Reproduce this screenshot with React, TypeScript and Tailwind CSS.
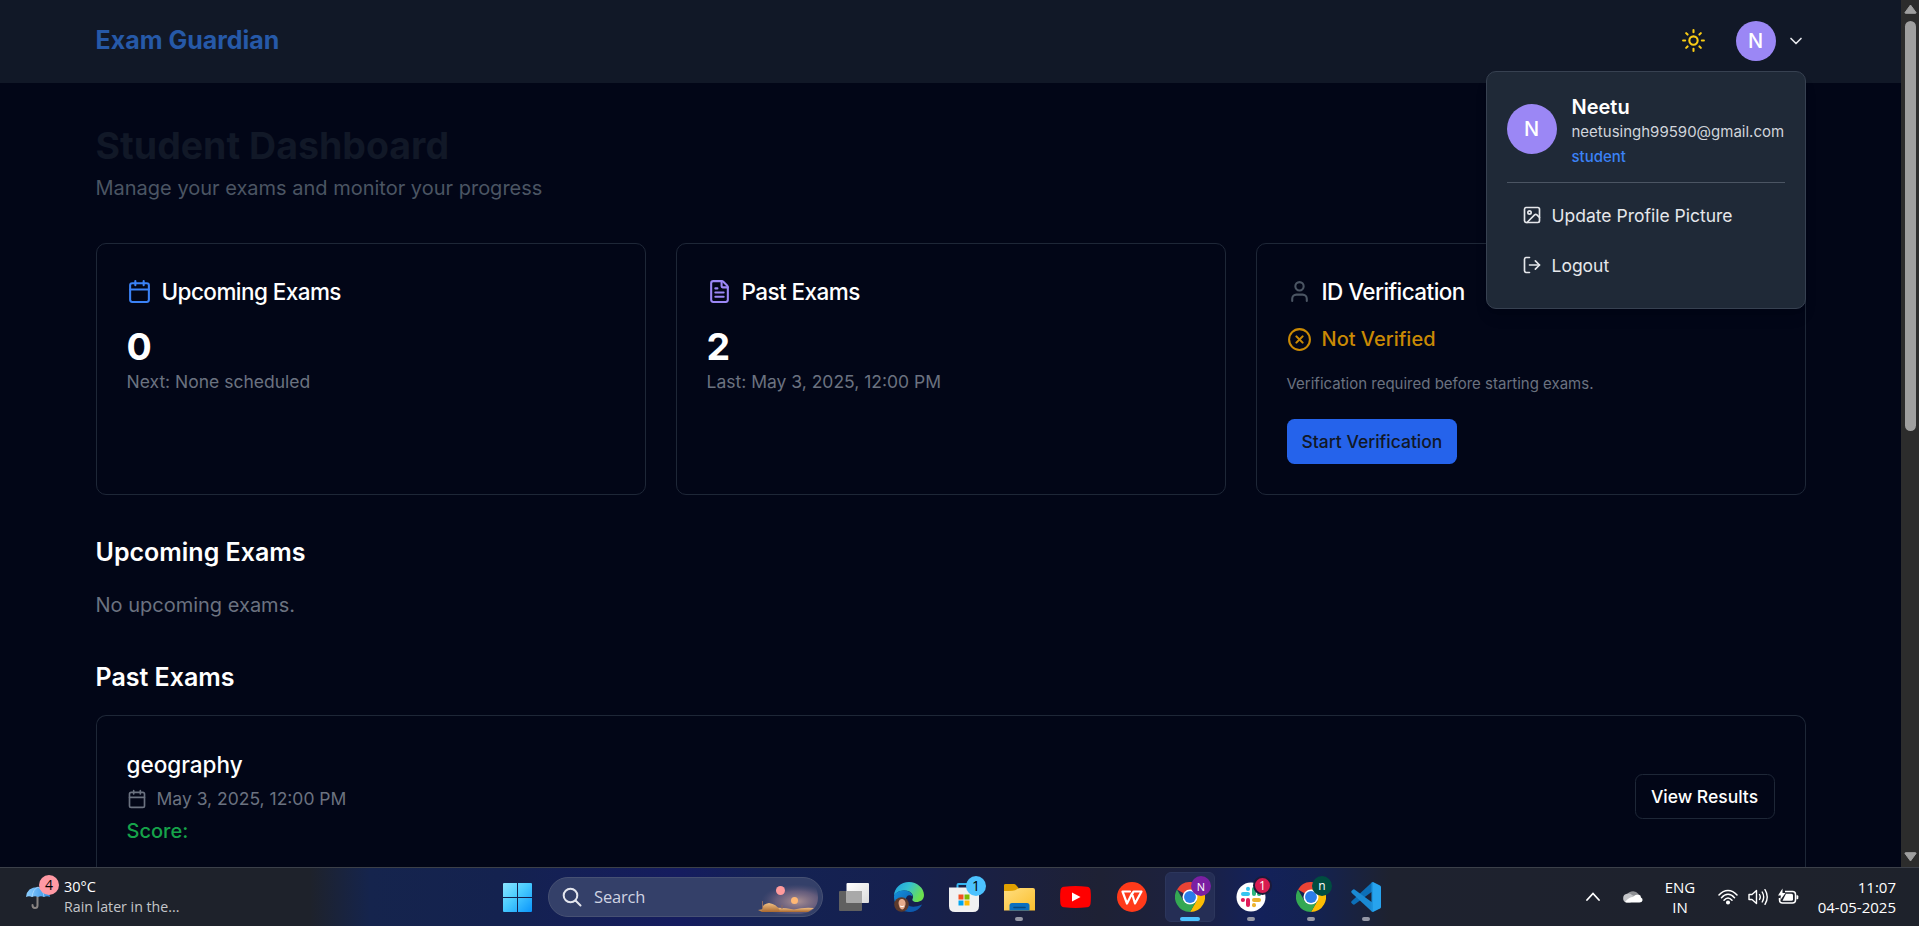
import type { ReactNode } from "react";
import {
  Calendar,
  ChevronDown,
  CircleX,
  FileText,
  Image as ImageIcon,
  LogOut,
  Sun,
  User,
} from "lucide-react";

function Header() {
  return (
    <header className="h-[83px] shrink-0 bg-[#111827]">
      <div className="mx-auto flex h-[82px] w-[1710px] items-center justify-between">
        <div className="-mt-px text-[25px] leading-[35px] font-bold text-[#2659a8]">Exam Guardian</div>
        <div className="relative flex items-center">
          <Sun className="mr-[30px] mb-px size-[25px] text-[#facc15]" />
          <div className="flex size-10 items-center justify-center rounded-full bg-[#9b87f5] text-[20px] font-medium text-white">
            N
          </div>
          <ChevronDown className="ml-2.5 size-5 text-gray-200" />
          <ProfileMenu />
        </div>
      </div>
    </header>
  );
}

function MenuItem({ icon, label }: { icon: ReactNode; label: string }) {
  return (
    <div className="flex h-[45px] items-center gap-2.5 px-[15px] text-[17.5px] text-gray-200">
      {icon}
      <span className="pt-px">{label}</span>
    </div>
  );
}

function ProfileMenu() {
  return (
    <div className="absolute top-[50px] right-0 z-10 flex w-80 flex-col rounded-[10px] border border-[#374151] bg-[#1f2937] p-5 shadow-lg">
      <div className="flex items-center gap-[15px] border-b border-[#4b5563] pb-[15px]">
        <div className="mb-px flex size-[50px] shrink-0 items-center justify-center rounded-full bg-[#9b87f5] text-[20px] font-medium text-white">
          N
        </div>
        <div className="flex flex-col">
          <span className="text-[20px] leading-[30px] font-semibold text-white">Neetu</span>
          <span className="text-[15px] leading-5 text-gray-300">neetusingh99590@gmail.com</span>
          <span className="mt-[5px] text-[15px] leading-5 font-medium text-[#3b82f6]">student</span>
        </div>
      </div>
      <div className="mt-2.5 flex flex-col gap-[5px]">
        <MenuItem icon={<ImageIcon className="mb-px size-5" />} label="Update Profile Picture" />
        <MenuItem icon={<LogOut className="mb-px size-5" />} label="Logout" />
      </div>
    </div>
  );
}

function StatCard({ icon, title, children }: { icon: ReactNode; title: string; children: ReactNode }) {
  return (
    <section className="flex h-[252px] flex-col items-start rounded-[10px] border border-[#1e2737] p-[30px]">
      <div className="mb-[15px] flex h-[35px] items-center gap-2.5">
        {icon}
        <h3 className="text-[22.5px] font-medium tracking-tight text-white">{title}</h3>
      </div>
      {children}
    </section>
  );
}

function Dashboard() {
  return (
    <main className="mx-auto flex w-[1710px] flex-col pt-10">
      <h1 className="text-[37.5px] leading-[45px] font-bold text-[#111827]">Student Dashboard</h1>
      <p className="mt-[5px] text-[20px] leading-[30px] text-[#4b5563]">
        Manage your exams and monitor your progress
      </p>

      <div className="mt-10 grid grid-cols-3 gap-[30px]">
        <StatCard icon={<Calendar className="size-[25px] text-[#3b82f6]" />} title="Upcoming Exams">
          <span className="text-[37.5px] leading-[45px] font-bold text-white">0</span>
          <span className="text-[17.5px] leading-[25px] text-[#6b7280]">Next: None scheduled</span>
        </StatCard>
        <StatCard icon={<FileText className="size-[25px] text-[#9b87f5]" />} title="Past Exams">
          <span className="text-[37.5px] leading-[45px] font-bold text-white">2</span>
          <span className="text-[17.5px] leading-[25px] text-[#6b7280]">Last: May 3, 2025, 12:00 PM</span>
        </StatCard>
        <StatCard icon={<User className="size-[25px] text-[#4b5563]" />} title="ID Verification">
          <div className="flex h-[30px] items-center gap-2.5 text-[20px] font-medium text-[#ca8a04]">
            <CircleX className="size-[25px]" />
            Not Verified
          </div>
          <span className="mt-5 text-[15px] leading-5 text-[#6b7280]">
            Verification required before starting exams.
          </span>
          <button className="mt-[25px] h-[45px] rounded-[7.5px] bg-[#2563eb] px-[15px] pt-0.5 text-[17.5px] font-medium text-[#111827]">
            Start Verification
          </button>
        </StatCard>
      </div>

      <h2 className="mt-10 text-[25px] leading-[35px] font-semibold text-white">Upcoming Exams</h2>
      <p className="mt-5 text-[20px] leading-[30px] text-[#6b7280]">No upcoming exams.</p>

      <h2 className="mt-10 text-[25px] leading-[35px] font-semibold text-white">Past Exams</h2>
      <section className="mt-5 flex h-[162px] shrink-0 items-center justify-between rounded-t-[10px] border border-b-0 border-[#1e2737] px-[30px]">
        <div className="flex flex-col">
          <h3 className="-mt-px text-[22.5px] leading-[35px] font-medium text-white">geography</h3>
          <div className="mt-[5px] flex h-[25px] items-center gap-2.5 text-[17.5px] text-[#6b7280]">
            <Calendar className="size-5" />
            May 3, 2025, 12:00 PM
          </div>
          <span className="mt-1 text-[20px] leading-[30px] font-medium text-[#16a34a]">Score:</span>
        </div>
        <button className="h-[45px] w-[140px] rounded-[7.5px] border border-[#1e2737] pt-0.5 text-[17.5px] font-medium text-white">
          View Results
        </button>
      </section>
    </main>
  );
}

function Scrollbar() {
  return (
    <div className="flex w-[18px] shrink-0 flex-col items-center bg-[#2c2c2c] pt-1 pb-[5px] pl-[3px] pr-0.5">
      <svg viewBox="0 0 13 10" className="h-[10px] w-[13px] shrink-0">
        <path d="M6.5 1 12 8.5Q12.300 9.300 11.500 9.300H1.500Q.7 9.300 1 8.500Z" fill="#9f9f9f" stroke="#9f9f9f" strokeLinejoin="round" />
      </svg>
      <div className="mt-[7px] h-[410px] w-[11px] rounded-full bg-[#9f9f9f]" />
      <svg viewBox="0 0 13 10" className="mt-auto h-[10px] w-[13px] shrink-0">
        <path d="M6.500 9 1 1.500Q.7 .7 1.500 .7H11.500Q12.300 .7 12 1.500Z" fill="#9f9f9f" stroke="#9f9f9f" strokeLinejoin="round" />
      </svg>
    </div>
  );
}

function Umbrella() {
  return (
    <svg viewBox="0 0 26 25" className="h-[25px] w-[26px]">
      <defs>
        <linearGradient id="umb" x1="0" x2="1">
          <stop offset="0" stopColor="#8fd0ff" />
          <stop offset="1" stopColor="#2f8de4" />
        </linearGradient>
      </defs>
      <path d="M12.500 11V20.500Q12.500 23 10 23Q7.500 23 7.500 20" fill="none" stroke="#8a8583" strokeWidth="2" strokeLinecap="round" />
      <path d="M1 12Q2 2 13 2Q24 2 25 12Q22 10.500 19 12Q16 10.500 13 12Q10 10.500 7 12Q4 10.500 1 12Z" fill="url(#umb)" />
      <path d="M7 12Q8 4 13 2Q18 4 19 12" fill="none" stroke="#c4e6ff" strokeWidth=".6" />
    </svg>
  );
}

function WindowsLogo() {
  return (
    <svg viewBox="0 0 29 29" className="size-[29px]">
      <defs>
        <linearGradient id="win" x1="0" y1="0" x2="1" y2="1" gradientUnits="objectBoundingBox">
          <stop offset="0" stopColor="#8be4ff" />
          <stop offset=".45" stopColor="#4accff" />
          <stop offset="1" stopColor="#0a95fb" />
        </linearGradient>
      </defs>
      <path d="M1 0H14V14H0V1Q0 0 1 0ZM15 0H28Q29 0 29 1V14H15ZM0 15H14V29H1Q0 29 0 28ZM15 15H29V28Q29 29 28 29H15Z" fill="url(#win)" />
    </svg>
  );
}

function SearchArt() {
  return (
    <svg viewBox="0 0 64 34" className="h-[34px] w-[64px]">
      <defs>
        <radialGradient id="sky" cx=".6" cy=".6" r=".5">
          <stop offset="0" stopColor="#b99a98" stopOpacity=".9" />
          <stop offset=".6" stopColor="#7d6a85" stopOpacity=".65" />
          <stop offset="1" stopColor="#5a5578" stopOpacity="0" />
        </radialGradient>
        <linearGradient id="rock" x1="0" y1="0" x2="0" y2="1">
          <stop offset="0" stopColor="#f3c184" />
          <stop offset="1" stopColor="#a8682f" />
        </linearGradient>
        <clipPath id="pill">
          <path d="M0 0H47Q64 2 64 17Q64 32 47 34H0Z" />
        </clipPath>
      </defs>
      <g clipPath="url(#pill)">
        <ellipse cx="36" cy="18" rx="36" ry="17" fill="url(#sky)" />
        <path d="M4 30Q24 26 40 29.500Q50 27 60 28L54 32H8Z" fill="url(#rock)" />
        <path d="M8 32Q7 24 15 23Q23 24 26 31L24 32Z" fill="url(#rock)" />
        <path d="M8.500 21V28M28 25V29" stroke="#8b6a63" strokeWidth="1" />
      </g>
      <circle cx="26.500" cy="10.500" r="4.500" fill="#ff9a9c" />
      <circle cx="40.500" cy="20.500" r="3.500" fill="#ffb874" />
    </svg>
  );
}

function TaskView() {
  return (
    <svg viewBox="0 0 30 30" className="size-[30px]">
      <defs>
        <linearGradient id="tvw" x1="0" y1="0" x2="1" y2="1">
          <stop offset="0" stopColor="#fff" />
          <stop offset="1" stopColor="#dcdcdc" />
        </linearGradient>
      </defs>
      <rect x="0" y="9" width="23" height="20" rx="1" fill="#606060" />
      <rect x="7.500" y="1" width="22.500" height="20" rx="1" fill="url(#tvw)" />
      <path d="M7.500 9H23V21H7.500Z" fill="#a9a9a9" />
    </svg>
  );
}

function Edge() {
  return (
    <svg viewBox="0 0 30 30" className="size-[30px]">
      <defs>
        <linearGradient id="edgeA" x1="0" y1="0" x2="1" y2=".4">
          <stop offset="0" stopColor="#1b9de2" />
          <stop offset=".5" stopColor="#35c1d0" />
          <stop offset="1" stopColor="#6be04f" />
        </linearGradient>
        <linearGradient id="edgeB" x1="0" y1="0" x2="1" y2="1">
          <stop offset="0" stopColor="#1391dd" />
          <stop offset="1" stopColor="#0b4a9c" />
        </linearGradient>
      </defs>
      <path d="M0 14C0 6 7 0 15 0C23 0 30 6 30 13C30 18 26 20 22.500 20C19 20 18 18 18.500 17C20 15 19 8.500 10 8.500C5 8.500 1 11.500 0 14Z" fill="url(#edgeA)" />
      <path d="M0 14C1 10.500 6 8.500 10 8.500C15 8.500 18.500 11 18.500 14.500C14.500 11 11 15 12 19C13 25 19 27.500 25 26C19 31.500 10 30.500 5 26.500C1 23 0 18 0 14Z" fill="url(#edgeB)" />
      <path d="M12 19C12 23 17 27.500 28 22.500C26 27 21 30 16 30C10 30 10 23 12 19Z" fill="#0d5aae" />
      <circle cx="7.500" cy="22.500" r="7.300" fill="#5d3a2c" />
      <path d="M4.500 21Q5 16.500 8.500 17Q12 18 11.500 22.500Q10.500 27.500 8 27.500Q5 26.500 4.500 21Z" fill="#e5ab8c" />
      <path d="M6 24Q8 25.500 10 24" stroke="#fff" strokeWidth="1" fill="none" />
    </svg>
  );
}

function Store() {
  return (
    <svg viewBox="0 0 30 30" className="size-[30px]">
      <path d="M8.500 8V3Q8.500 2 9.500 2H20.500Q21.500 2 21.500 3V8" fill="none" stroke="#35b5f0" strokeWidth="2" />
      <path d="M0 5.500H30V24Q30 30 24 30H6Q0 30 0 24Z" fill="#f1f1f1" />
      <path d="M9.500 12.500H14.500V17.500H9.500Z" fill="#f25022" />
      <path d="M15.500 12.500H20.500V17.500H15.500Z" fill="#7fba00" />
      <path d="M9.500 18.500H14.500V23.500H9.500Z" fill="#00a4ef" />
      <path d="M15.500 18.500H20.500V23.500H15.500Z" fill="#ffb900" />
    </svg>
  );
}

function Explorer() {
  return (
    <svg viewBox="0 0 31 30" className="h-[30px] w-[31px]">
      <defs>
        <linearGradient id="fold" x1="0" y1="0" x2="1" y2="1">
          <stop offset="0" stopColor="#ffde80" />
          <stop offset="1" stopColor="#fbbf2d" />
        </linearGradient>
      </defs>
      <path d="M0 3Q0 2 1.500 2H10Q11 2 12 3L14.500 6V12H0Z" fill="#e0a000" />
      <path d="M0 9Q11 9 12.500 7.500Q14 6 16 6H29Q31 6 31 8V28.500H0Z" fill="url(#fold)" />
      <path d="M5.500 28.500V23.500Q5.500 21 8 21H23Q25.500 21 25.500 23.500V28.500Z" fill="#0c6fc0" />
      <path d="M10 25.500H21" stroke="#07487f" strokeWidth="1.600" strokeLinecap="round" />
    </svg>
  );
}

function YouTube() {
  return (
    <svg viewBox="0 0 31 22" className="h-[22px] w-[31px]">
      <path d="M4 .7Q15.500-.6 27 .7Q30 1 30.500 4Q31.300 11 30.500 18Q30 21 27 21.300Q15.500 22.600 4 21.300Q1 21 .5 18Q-.3 11 .5 4Q1 1 4 .7Z" fill="#f00" />
      <path d="M12 6.500 20.500 11 12 15.500Z" fill="#fff" />
    </svg>
  );
}

function Wps() {
  return (
    <svg viewBox="0 0 30 30" className="size-[30px]">
      <circle cx="15" cy="15" r="15" fill="#ff3a1a" />
      <path d="M13 9.500H5.500L10 21.500 15 11.500 18 21.500 24.500 9.500H16.500L14.500 13.500" fill="none" stroke="#fff" strokeWidth="2.200" strokeLinejoin="round" strokeLinecap="round" />
    </svg>
  );
}

function Chrome() {
  return (
    <svg viewBox="0 0 48 48" className="size-[30px]">
      <path d="M24 24 3.200 12A24 24 0 0 1 44.800 12Z" fill="#ea4335" />
      <path d="M24 12H44.800A24 24 0 0 1 24 48L34.400 30Z" fill="#fbbc04" />
      <path d="M3.200 12 13.600 30 24 36 34.400 30 24 48A24 24 0 0 1 3.200 12Z" fill="#34a853" />
      <circle cx="24" cy="24" r="12" fill="#fff" />
      <circle cx="24" cy="24" r="9.500" fill="#2b7de9" />
    </svg>
  );
}

function Slack() {
  return (
    <svg viewBox="0 0 30 30" className="size-[30px]">
      <circle cx="15" cy="15" r="14.500" fill="#fff" />
      <g fill="none" strokeWidth="4" strokeLinecap="round">
        <path d="M7 12H12" stroke="#36c5f0" />
        <path d="M12 7V6.800" stroke="#36c5f0" />
        <path d="M18 7V12" stroke="#2eb67d" />
        <path d="M23 12H23.200" stroke="#2eb67d" />
        <path d="M18 18H23" stroke="#ecb22e" />
        <path d="M18 23V23.200" stroke="#ecb22e" />
        <path d="M12 18V23" stroke="#e01e5a" />
        <path d="M7 18H6.800" stroke="#e01e5a" />
      </g>
    </svg>
  );
}

function VsCode() {
  return (
    <svg viewBox="0 0 30 30" className="size-[30px]">
      <path d="M22 0 29 3.500Q30 4 30 5V25Q30 26 29 26.500L22 30Z" fill="#27a3ee" />
      <path d="M22 0V9L3.500 22.500Q2.500 23 1.500 22L.5 21Q-.2 20 .8 19L20.500 .8Z" fill="#0c6fb8" />
      <path d="M22 30V21L3.500 7.500Q2.500 7 1.500 8L.5 9Q-.2 10 .8 11L20.500 29.200Z" fill="#1a8ad4" />
      <path d="M22 0 20.500 .8V29.200L22 30Z" fill="#1c94df" />
    </svg>
  );
}

type AppProps = {
  icon: ReactNode;
  gap: string;
  badge?: string;
  badgeClass?: string;
  running?: boolean;
  active?: boolean;
};

function TaskApp({ icon, gap, badge, badgeClass, running, active }: AppProps) {
  return (
    <div className={`relative flex size-[50px] shrink-0 items-center justify-center rounded-md ${gap} ${active ? "border border-[#2c365c] bg-[#252e55]" : ""}`}>
      {icon}
      {badge && (
        <span className={`absolute flex items-center justify-center rounded-full leading-none ${badgeClass}`}>{badge}</span>
      )}
      {running && <span className="absolute bottom-[1px] h-1 w-2 rounded-full bg-[#9497a5]" />}
      {active && <span className="absolute bottom-0 h-1 w-5 rounded-full bg-[#4cc2ff]" />}
    </div>
  );
}

function Tray() {
  return (
    <div className="ml-auto flex h-full items-center text-[15px] leading-5 text-white">
      <svg viewBox="0 0 14 9" className="mb-px h-[9px] w-[14px]">
        <path d="M1 8 7 1.500 13 8" fill="none" stroke="#fff" strokeWidth="1.800" strokeLinecap="round" />
      </svg>
      <svg viewBox="0 0 21 14" className="mb-[2px] ml-[22px] h-[14px] w-[21px]">
        <path d="M4 8A7 7 0 0 1 16.500 5L10 9Z" fill="#8e9094" />
        <path d="M4.500 13.500A4.500 4.500 0 0 1 5 4.700Q8 4 10 6L17 9L8 13.500Z" fill="#c3c5c8" />
        <path d="M3 13Q7 8 11 8Q13 5 16.500 5.500Q19 6 19 8.500Q21 9.500 20.500 11.500Q20 13.500 17.500 13.500H4.500Z" fill="#fff" />
      </svg>
      <div className="ml-[19px] w-[36px] text-center">
        <div>ENG</div>
        <div>IN</div>
      </div>
      <svg viewBox="0 0 20 16" className="mb-px ml-[20px] h-[16px] w-[20px]" fill="none" stroke="#fff" strokeWidth="1.500" strokeLinecap="round">
        <path d="M1 6Q5 1.500 10 1.500T19 6M3.500 8.700Q6.500 5.300 10 5.300T16.500 8.700M6 11.300Q8 9 10 9T14 11.300" />
        <circle cx="10" cy="13.500" r="1.300" fill="#fff" />
      </svg>
      <svg viewBox="0 0 21 18" className="mb-px ml-[10px] h-[18px] w-[21px]" fill="none" stroke="#fff" strokeWidth="1.400" strokeLinecap="round" strokeLinejoin="round">
        <path d="M1 6.500H4L8.500 2.500V15.500L4 11.500H1ZM11.500 6.500Q13 9 11.500 11.500M14.200 4Q17.200 9 14.200 14M17 1.700Q21.500 9 17 16.300" />
      </svg>
      <svg viewBox="0 0 21 18" className="mb-px ml-[9px] h-[18px] w-[21px]">
        <path d="M7 3.500H14.500Q17.500 3.500 17.500 6.500V12Q17.500 15 14.500 15H4.500Q1.500 15 1.500 12V10" fill="none" stroke="#fff" strokeWidth="1.500" />
        <path d="M18.500 7.300H19.300Q20.300 7.300 20.300 8.300V10.300Q20.300 11.300 19.300 11.300H18.500Z" fill="#fff" />
        <path d="M8 5.700H13.500Q15 5.700 15 7.200V11.300Q15 12.800 13.500 12.800H4.500Z" fill="#fff" />
        <path d="M4.500 .5 0 7.500H3L2 12.500 7.500 5H4.500Z" fill="#fff" />
      </svg>
      <div className="mr-[23px] ml-[18px] w-[79px] text-right whitespace-nowrap">
        <div>11:07</div>
        <div className="flex justify-end">04-05-2025</div>
      </div>
    </div>
  );
}

function Taskbar() {
  return (
    <footer className="flex h-[59px] shrink-0 items-center border-t border-[#3c4049] bg-[linear-gradient(90deg,#1e222b_0px,#1e222b_310px,#15244d_370px,#14224f_500px,#151c5f_680px,#142253_770px,#15204f_900px,#1b2040_1010px,#1e2134_1100px,#1c2140_1190px,#13215a_1260px,#14224f_1320px,#1e222f_1390px,#1e222b_1919px)] font-['Open_Sans',sans-serif]">
      <div className="relative ml-[25px] flex h-full w-[478px] items-center">
        <Umbrella />
        <span className="absolute top-[7px] left-[14px] flex size-5 items-center justify-center rounded-full bg-[#ff99a4] text-[14px] leading-none text-black">
          4
        </span>
        <div className="ml-[13px] text-[14.500px] leading-5">
          <div className="text-white">30°C</div>
          <div className="text-[14.2px] text-[#c5c7ca]">Rain later in the...</div>
        </div>
      </div>
      <WindowsLogo />
      <div className="ml-4 flex h-10 w-[275px] items-center rounded-full border border-[#475173] bg-[#344069] pr-1 pl-[13px]">
        <svg viewBox="0 0 20 20" className="size-5" fill="none" stroke="#e4e6ee" strokeWidth="2" strokeLinecap="round">
          <circle cx="8.500" cy="8.500" r="6.800" />
          <path d="m13.500 13.500 5 5" />
        </svg>
        <span className="ml-[12px] pt-px text-[16.500px] tracking-[-0.01em] text-[#cfd3e2]">Search</span>
        <div className="ml-auto">
          <SearchArt />
        </div>
      </div>
      <TaskApp icon={<TaskView />} gap="ml-[6px]" />
      <TaskApp icon={<Edge />} gap="ml-[5px]" />
      <TaskApp icon={<Store />} gap="ml-[5px]" badge="1" badgeClass="top-[4px] left-[27px] size-5 bg-[#4cc2ff] text-[14px] text-black" />
      <TaskApp icon={<Explorer />} gap="ml-[5px]" running />
      <TaskApp icon={<YouTube />} gap="ml-[6px]" />
      <TaskApp icon={<Wps />} gap="ml-[7px]" />
      <TaskApp icon={<Chrome />} gap="ml-[8px]" active badge="N" badgeClass="top-[3px] left-[25px] size-5 bg-[#7b1fa2] text-[11px] text-white" />
      <TaskApp icon={<Slack />} gap="ml-[11px]" running badge="1" badgeClass="top-[4px] left-[27px] size-[19px] border-2 border-[#1b1b3a] bg-[#d81b50] text-[12px] text-white" />
      <TaskApp icon={<Chrome />} gap="ml-[10px]" running badge="n" badgeClass="top-[4px] left-[26px] size-5 bg-[#004d40] text-[12px] text-white" />
      <TaskApp icon={<VsCode />} gap="ml-[5px]" running />
      <Tray />
    </footer>
  );
}

export default function App() {
  return (
    <div className="flex h-[926px] w-[1919px] flex-col overflow-hidden bg-[#020617] font-[Inter,sans-serif]">
      <div className="flex h-[867px] shrink-0">
        <div className="flex h-[867px] w-[1901px] flex-col overflow-hidden">
          <Header />
          <Dashboard />
        </div>
        <Scrollbar />
      </div>
      <Taskbar />
    </div>
  );
}
